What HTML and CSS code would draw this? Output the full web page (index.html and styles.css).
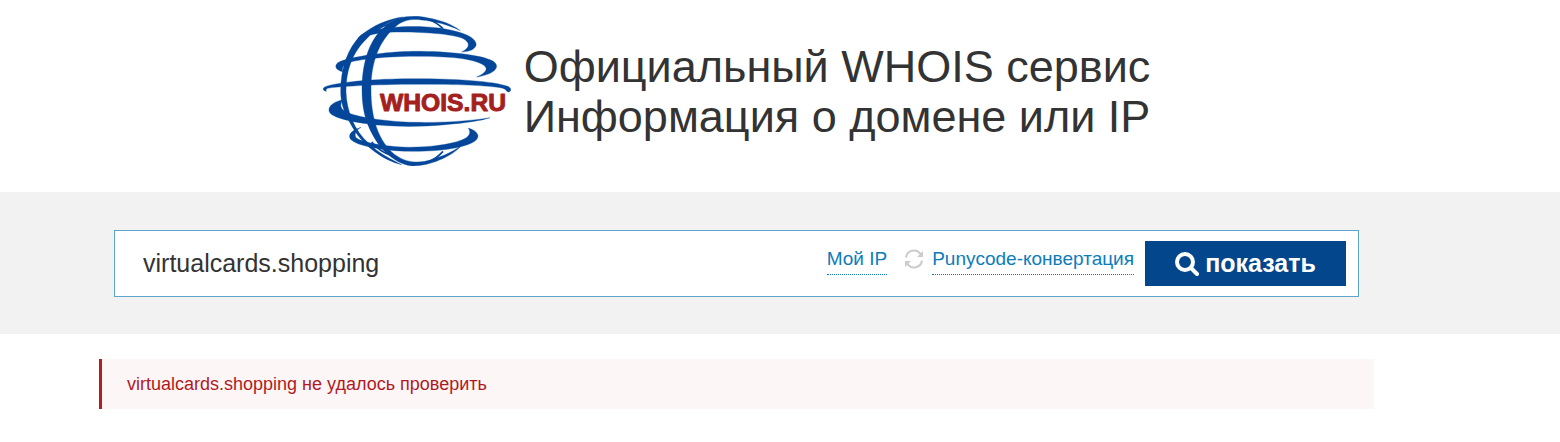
FILE: index.html
```html
<!DOCTYPE html>
<html lang="ru">
<head>
<meta charset="utf-8">
<title>WHOIS.RU</title>
<link rel="stylesheet" href="styles.css">
</head>
<body>
<header class="header">
  <svg class="logo" viewBox="24 24 564 450" role="img" aria-label="WHOIS.RU">
    <g class="logo-globe">
      <path d="M141 245C141 160 165 95 205 60C240 22 300 20 340 30C375 36 410 48 436 68C400 50 360 40 320 36C290 32 265 36 244 54C190 100 168 165 168 245C168 330 190 400 240 440C270 462 300 465 330 460C370 450 410 435 440 412C410 448 340 474 295 474C250 472 210 435 195 415C160 365 141 320 141 245Z"/>
      <path d="M77 250C77 180 98 120 138 82C175 52 220 32 265 27C225 40 185 60 155 92C110 135 93 190 93 250C94 310 120 370 160 405C190 435 230 455 260 470C205 458 145 412 115 362C90 320 77 290 77 250Z"/>
      <path d="M128 109C120 90 140 75 170 69C240 50 370 50 440 75C480 88 490 108 480 118C472 129 455 131 440 132C460 122 468 108 450 95C425 77 300 70 220 73C180 76 150 83 141 93C136 98 134 105 128 109Z"/>
      <path d="M84 192C55 185 55 165 85 157C150 138 250 130 300 130C400 130 500 140 535 160C560 178 535 200 485 207C520 192 520 178 500 168C460 148 380 145 300 145C200 145 110 157 93 167C83 173 80 182 84 192Z"/>
      <path d="M35 250C20 248 20 238 40 233C100 218 200 212 300 212C420 212 540 220 578 235C590 240 590 250 580 252C572 250 575 243 560 240C500 230 400 229 300 229C180 229 60 236 38 241C32 244 32 248 35 250Z"/>
      <path d="M84 275C60 280 40 292 42 308C45 330 120 345 200 352C260 357 330 356 390 350C450 345 500 338 525 329C440 343 340 345 270 342C200 338 110 325 88 308C76 300 74 288 84 275Z"/>
      <path d="M138 358C110 367 98 380 106 393C120 410 180 423 240 428C300 432 370 430 420 420C460 412 490 400 489 383C486 370 470 363 460 361C470 375 462 388 440 396C400 412 320 420 260 417C200 414 135 402 122 388C118 375 125 365 138 358Z"/>
    </g>
    <path class="logo-line" d="M335 32Q365 42 384 62M384 430Q365 452 335 464M180 72Q205 50 232 45M170 402Q195 432 225 440"/>
    <text class="logo-text" x="195" y="310">WHOIS.RU</text>
  </svg>
  <h1 class="title">Официальный WHOIS сервис<br>Информация о домене или IP</h1>
</header>

<main>
  <section class="search-band">
    <form class="search">
      <input class="search-input" type="text" name="domain" value="virtualcards.shopping" aria-label="Домен или IP">
      <nav class="tools">
        <a class="tool-link" href="#ip">Мой IP</a>
        <svg class="refresh" viewBox="0 0 20 20" aria-hidden="true">
          <path class="refresh-arc" d="M2 8.5A8 8 0 0 1 16.5 5M18 11.5A8 8 0 0 1 3.5 15"/>
          <path class="refresh-head" d="M19 2V8H13ZM1 18V12H7Z"/>
        </svg>
        <a class="tool-link" href="#punycode">Punycode-конвертация</a>
      </nav>
      <button class="submit" type="submit">
        <svg class="submit-icon" viewBox="0 0 24 24" aria-hidden="true"><circle cx="10" cy="10" r="8"/><path d="M16 16L22 22"/></svg>
        <span>показать</span>
      </button>
    </form>
  </section>
  <section class="result">
    <p class="alert" role="alert">virtualcards.shopping не удалось проверить</p>
  </section>
</main>
</body>
</html>
```
FILE: styles.css
```css
* {
  box-sizing: border-box;
}

body {
  margin: 0;
  background: #fff;
  color: #333;
  font-family: "Liberation Sans", Arial, sans-serif;
}

.header,
.search-band,
.result {
  padding-left: 99px;
  padding-right: 186px;
}

.header {
  display: flex;
  align-items: center;
  justify-content: center;
  gap: 13px;
  padding-top: 16px;
  padding-bottom: 26px;
}

.logo {
  flex: none;
  width: 188px;
  height: 150px;
}

.logo-globe {
  fill: #04479a;
  stroke: #04479a;
  stroke-width: 1px;
}

.logo-line {
  fill: none;
  stroke: #04479a;
  stroke-width: 5px;
}

.logo-text {
  fill: #a51f1f;
  stroke: #a51f1f;
  stroke-width: 3px;
  stroke-linejoin: round;
  font-size: 74px;
  font-weight: bold;
}

.title {
  margin: 0;
  padding-top: 2px;
  font-size: 45px;
  font-weight: normal;
  line-height: 50px;
}

.search-band {
  padding-top: 38px;
  padding-bottom: 37px;
  background: #f2f2f2;
}

.search {
  display: flex;
  align-items: center;
  margin: 0 15px;
  padding: 10px 12px 10px 28px;
  border: 1px solid #5fa4cb;
  background: #fff;
}

.search-input {
  flex: 1;
  min-width: 0;
  height: 45px;
  padding: 0;
  border: 0;
  outline: 0;
  background: transparent;
  color: #333;
  font: 25px "Liberation Sans", Arial, sans-serif;
}

.tools {
  display: flex;
  align-items: center;
  margin-right: 11px;
  padding-bottom: 5px;
}

.tool-link {
  padding-bottom: 3px;
  border-bottom: 1px dotted #0e7cba;
  color: #0e7cba;
  font-size: 19px;
  line-height: 24px;
  text-decoration: none;
  white-space: nowrap;
}

.refresh {
  width: 20px;
  height: 20px;
  margin: 0 8px 4px 17px;
}

.refresh-arc {
  fill: none;
  stroke: #ccc;
  stroke-width: 2px;
}

.refresh-head {
  fill: #ccc;
}

.submit {
  display: flex;
  align-items: center;
  justify-content: center;
  gap: 6px;
  width: 201px;
  height: 45px;
  padding: 0;
  border: 0;
  background: #04468c;
  color: #fff;
  font: bold 25px "Liberation Sans", Arial, sans-serif;
}

.submit-icon {
  width: 24px;
  height: 24px;
  fill: none;
  stroke: #fff;
  stroke-width: 4px;
  stroke-linecap: round;
}

.result {
  padding-top: 25px;
}

.alert {
  margin: 0;
  padding: 13px 25px;
  border-left: 3px solid #b71a1f;
  background: #fdf6f6;
  color: #b01a1f;
  font-size: 18px;
  line-height: 24px;
}
```
